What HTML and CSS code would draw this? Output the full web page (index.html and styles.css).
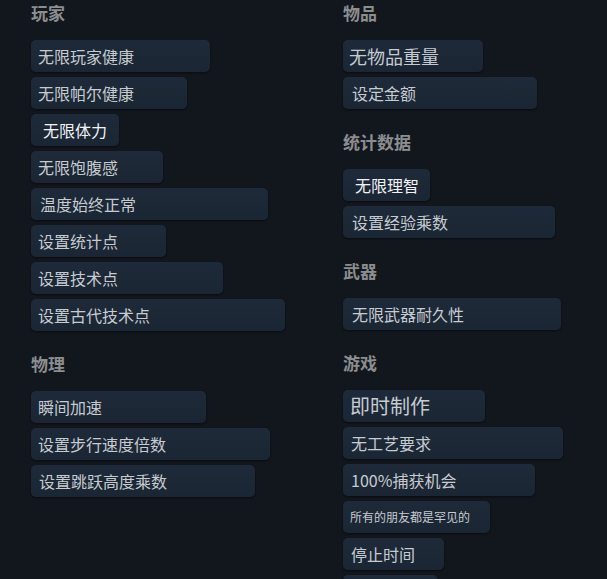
FILE: index.html
```html
<!DOCTYPE html>
<html lang="zh-CN">
<head>
<meta charset="utf-8">
<title>作弊菜单</title>
<link rel="stylesheet" href="styles.css">
</head>
<body>
<main class="board">
  <div class="col">
    <section class="section">
      <h2 class="heading">玩家</h2>
      <div class="list">
        <div class="btn w179">无限玩家健康</div>
        <div class="btn w156">无限帕尔健康</div>
        <div class="btn hl w88">无限体力</div>
        <div class="btn w132">无限饱腹感</div>
        <div class="btn pad9 w237">温度始终正常</div>
        <div class="btn w135">设置统计点</div>
        <div class="btn w192">设置技术点</div>
        <div class="btn w254">设置古代技术点</div>
      </div>
    </section>
    <section class="section">
      <h2 class="heading">物理</h2>
      <div class="list">
        <div class="btn w175">瞬间加速</div>
        <div class="btn w239">设置步行速度倍数</div>
        <div class="btn pad8 w224">设置跳跃高度乘数</div>
      </div>
    </section>
  </div>
  <div class="col">
    <section class="section">
      <h2 class="heading">物品</h2>
      <div class="list">
        <div class="btn big pad6 w140">无物品重量</div>
        <div class="btn pad9 w194">设定金额</div>
      </div>
    </section>
    <section class="section">
      <h2 class="heading">统计数据</h2>
      <div class="list">
        <div class="btn hl w87">无限理智</div>
        <div class="btn pad9 w212">设置经验乘数</div>
      </div>
    </section>
    <section class="section">
      <h2 class="heading">武器</h2>
      <div class="list">
        <div class="btn pad9 w218">无限武器耐久性</div>
      </div>
    </section>
    <section class="section">
      <h2 class="heading">游戏</h2>
      <div class="list">
        <div class="btn huge w142">即时制作</div>
        <div class="btn pad8 w220">无工艺要求</div>
        <div class="btn pad8 w192">100%捕获机会</div>
        <div class="btn small w147">所有的朋友都是罕见的</div>
        <div class="btn pad8 w101">停止时间</div>
        <div class="btn pad8 w95"></div>
      </div>
    </section>
  </div>
</main>
</body>
</html>
```

FILE: styles.css
```css
html {
  overflow: hidden;
  background: #12161d;
}

body {
  margin: 0;
  background: #12161d;
  font-family: "Noto Sans CJK SC", "Noto Sans", "Liberation Sans", sans-serif;
  color: #c6cbd1;
}

.board {
  display: grid;
  grid-template-columns: 312px 1fr;
  padding: 3px 0 0 31px;
}

.col {
  display: flex;
  flex-direction: column;
}

.section + .section {
  margin-top: 23px;
}

.heading {
  margin: 0 0 17px;
  height: 20px;
  line-height: 20px;
  font-size: 17px;
  font-weight: 700;
  color: #8c8d8f;
}

.list {
  display: flex;
  flex-direction: column;
  align-items: flex-start;
  gap: 5px;
}

.btn {
  box-sizing: border-box;
  height: 32px;
  display: flex;
  align-items: center;
  padding: 0 7px;
  border-radius: 5px;
  background: linear-gradient(#1e2a39, #1b2634);
  box-shadow: 0 1px 2px rgba(0, 0, 0, 0.45);
  font-size: 16px;
  line-height: 1;
  white-space: nowrap;
  color: #c6cbd1;
}

.btn.hl {
  padding-left: 12px;
  color: #f0f2f5;
}

.btn.big { font-size: 18px; }
.btn.huge { font-size: 20px; }
.btn.small { font-size: 12px; }

.pad6 { padding-left: 6px; }
.pad8 { padding-left: 8px; }
.pad9 { padding-left: 9px; }

.w87 { width: 87px; }
.w88 { width: 88px; }
.w95 { width: 95px; }
.w101 { width: 101px; }
.w132 { width: 132px; }
.w135 { width: 135px; }
.w140 { width: 140px; }
.w142 { width: 142px; }
.w147 { width: 147px; }
.w156 { width: 156px; }
.w175 { width: 175px; }
.w179 { width: 179px; }
.w192 { width: 192px; }
.w194 { width: 194px; }
.w212 { width: 212px; }
.w218 { width: 218px; }
.w220 { width: 220px; }
.w224 { width: 224px; }
.w237 { width: 237px; }
.w239 { width: 239px; }
.w254 { width: 254px; }
```
